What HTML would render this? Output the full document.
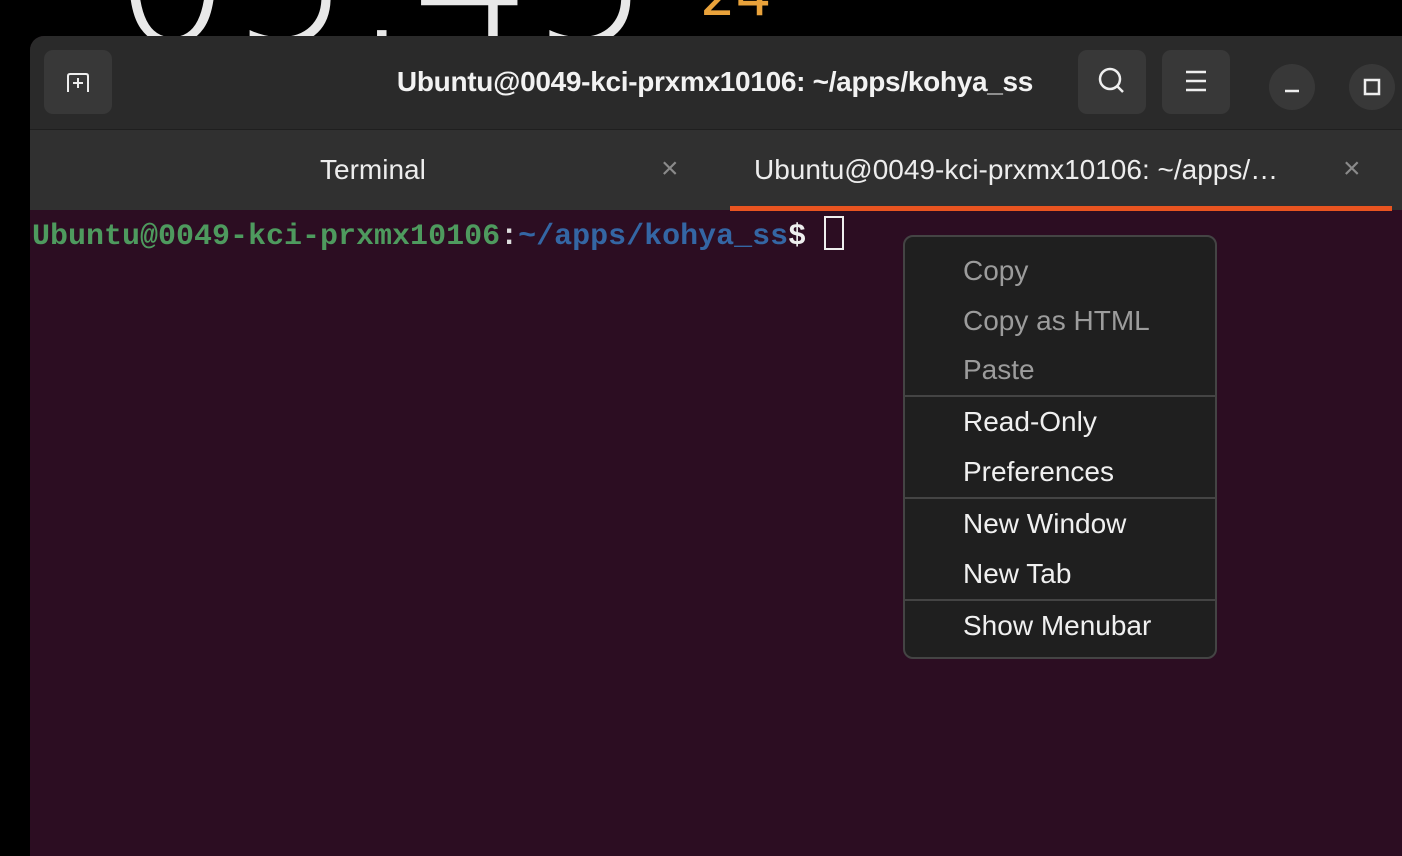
<!DOCTYPE html>
<html><head><meta charset="utf-8"><style>
*{margin:0;padding:0;box-sizing:border-box}
body{width:1402px;height:842px;background:#000;overflow:hidden;position:relative;font-family:"Liberation Sans","DejaVu Sans",sans-serif}
.clock{position:absolute;left:112px;top:-118px;font-size:190px;color:#e8e8e8;font-family:"DejaVu Sans",sans-serif;font-weight:300;letter-spacing:-2px;line-height:1}
.date{position:absolute;left:700px;top:-36px;font-size:56px;color:#e9a23b;font-family:"DejaVu Sans",sans-serif}
.win{position:absolute;left:30px;top:36px;width:1380px;height:820px;background:#2c0d22;border-radius:14px 0 0 0;overflow:hidden}
.hdr{position:absolute;left:0;top:0;right:0;height:94px;background:#2a2a2a;border-bottom:1px solid #1f1f1f}
.btn{position:absolute;top:14px;width:68px;height:64px;background:#383838;border-radius:9px}
.rnd{position:absolute;top:28px;width:46px;height:46px;border-radius:50%;background:#383838}
.title{position:absolute;left:0;right:0;top:30px;text-align:center;color:#f2f2f2;font-weight:bold;font-size:28px;padding-right:30px;padding-left:20px;letter-spacing:-0.3px}
.tabs{position:absolute;left:0;right:0;top:94px;height:80px;background:#303030}
.tab{position:absolute;top:1px;height:80px;line-height:78px;color:#ededed;font-size:28px}
.x{position:absolute;top:0;line-height:78px;color:#8a8a8a;font-size:30px}
.prompt{position:absolute;left:2px;top:180px;font-family:"Liberation Mono","DejaVu Sans Mono",monospace;font-size:30px;font-weight:bold;white-space:pre}
.menu{position:absolute;left:903px;top:235px;width:314px;height:424px;background:#1f1f1f;border:2px solid #444;border-radius:10px}
.it{position:absolute;left:58px;font-size:28px;color:#f0f0f0;margin-top:1px}
.dis{color:#9c9c9c}
.sep{position:absolute;left:0;right:0;height:2px;background:#444}
</style></head><body>
<div class="clock">05:45</div>
<div class="date">24</div>
<div class="win">
 <div class="hdr">
  <div class="btn" style="left:14px">
   <svg width="68" height="64" viewBox="0 0 68 64"><path d="M24 42 V26 Q24 24 26 24 H42 Q44 24 44 26 V42" fill="none" stroke="#eee" stroke-width="2"/><path d="M34 28 V38 M29 33 H39" stroke="#eee" stroke-width="2"/></svg>
  </div>
  <div class="title">Ubuntu@0049-kci-prxmx10106: ~/apps/kohya_ss</div>
  <div class="btn" style="left:1048px">
   <svg width="68" height="64" viewBox="0 0 68 64"><circle cx="32" cy="29" r="10" fill="none" stroke="#eee" stroke-width="2.5"/><path d="M39 36 L45 42" stroke="#eee" stroke-width="2.5"/></svg>
  </div>
  <div class="btn" style="left:1132px">
   <svg width="68" height="64" viewBox="0 0 68 64"><path d="M24 22 H44 M24 31 H44 M24 40 H44" stroke="#eee" stroke-width="2.5"/></svg>
  </div>
  <div class="rnd" style="left:1239px"><svg width="46" height="46"><path d="M16 27 H30" stroke="#eee" stroke-width="2.5"/></svg></div>
  <div class="rnd" style="left:1319px"><svg width="46" height="46"><rect x="16" y="16" width="14" height="14" fill="none" stroke="#eee" stroke-width="2.5"/></svg></div>
 </div>
 <div class="tabs">
  <div class="tab" style="left:290px">Terminal</div>
  <div class="x" style="left:631px">×</div>
  <div class="tab" style="left:724px">Ubuntu@0049-kci-prxmx10106: ~/apps/…</div>
  <div class="x" style="left:1313px">×</div>
  <div style="position:absolute;left:700px;width:662px;top:76px;height:5px;background:#e95420"></div>
 </div>
 <div class="prompt"><span style="color:#4e9a5e">Ubuntu@0049-kci-prxmx10106</span><span style="color:#ddd">:</span><span style="color:#3466a4">~/apps/kohya_ss</span><span style="color:#eee">$ </span><span style="display:inline-block;width:20px;height:34px;border:2px solid #eee;vertical-align:-6px"></span></div>
</div>
<div class="menu">
 <div class="it dis" style="top:17px">Copy</div>
 <div class="it dis" style="top:67px">Copy as HTML</div>
 <div class="it dis" style="top:116px">Paste</div>
 <div class="sep" style="top:158px"></div>
 <div class="it" style="top:168px">Read-Only</div>
 <div class="it" style="top:218px">Preferences</div>
 <div class="sep" style="top:260px"></div>
 <div class="it" style="top:270px">New Window</div>
 <div class="it" style="top:320px">New Tab</div>
 <div class="sep" style="top:362px"></div>
 <div class="it" style="top:372px">Show Menubar</div>
</div>
</body></html>
